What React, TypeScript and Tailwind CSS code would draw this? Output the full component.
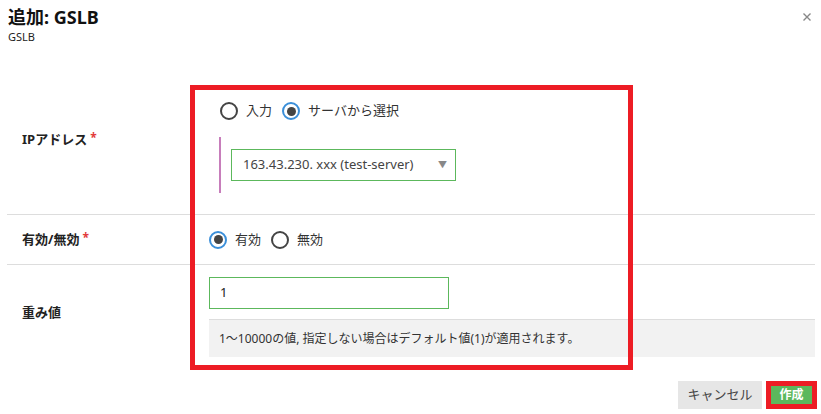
function Radio({ label, checked }: { label: string; checked?: boolean }) {
  return (
    <label className="flex items-center gap-[8px] text-[13px] text-[#333]">
      {checked ? (
        <span className="flex h-[18px] w-[18px] items-center justify-center rounded-full border-[2px] border-[#3b8fd9] bg-white">
          <span className="h-[9px] w-[9px] rounded-full bg-[#444]" />
        </span>
      ) : (
        <span className="h-[18px] w-[18px] rounded-full border-[2px] border-[#444] bg-white" />
      )}
      <span>{label}</span>
    </label>
  );
}

function FieldLabel({ text, required }: { text: string; required?: boolean }) {
  return (
    <div className="flex w-[192px] shrink-0 items-center pl-[15px] text-[13px] font-bold text-[#222]">
      {text}
      {required && <span className="ml-[3px] -mt-[4px] text-[12px] text-[#e23a3a]">*</span>}
    </div>
  );
}

export default function App() {
  return (
    <div className="relative h-[414px] w-[821px] overflow-hidden bg-white font-['Noto_Sans','Noto_Sans_CJK_JP',sans-serif]">
      {/* Header */}
      <div className="px-[8px] pt-[6px]">
        <h1 className="text-[18px] font-bold leading-[22px] text-[#111]">追加: GSLB</h1>
        <p className="mt-[2px] text-[11px] leading-[14px] text-[#222]">GSLB</p>
      </div>
      <button className="absolute right-[10px] top-[13px]">
        <svg width="8" height="8" viewBox="0 0 8 8" stroke="#888" strokeWidth="1.4">
          <path d="M0.5 0.5 L7.5 7.5 M7.5 0.5 L0.5 7.5" />
        </svg>
      </button>

      {/* Form */}
      <div className="ml-[7px] mt-[21px] w-[808px]">
        {/* IP address */}
        <div className="flex h-[150px] border-b border-[#dddddd]">
          <FieldLabel text="IPアドレス" required />
          <div className="flex-1 pl-[10px] pt-[37px]">
            <div className="ml-[11px] flex h-[18px] items-center gap-[10px]">
              <Radio label="入力" />
              <Radio label="サーバから選択" checked />
            </div>
            <div className="ml-[10px] mt-[17px] w-fit border-l-[2px] border-[#c77dbb] py-[12px] pl-[10px]">
              <div className="flex h-[32px] w-[225px] items-center justify-between border border-[#5cb85c] pl-[11px] pr-[8px] text-[13px] text-[#444]">
                <span>163.43.230. xxx (test-server)</span>
                <span className="text-[9px] text-[#888]">▼</span>
              </div>
            </div>
          </div>
        </div>

        {/* Enabled / disabled */}
        <div className="flex h-[50px] border-b border-[#dddddd]">
          <FieldLabel text="有効/無効" required />
          <div className="flex flex-1 items-center gap-[10px] pl-[10px]">
            <Radio label="有効" checked />
            <Radio label="無効" />
          </div>
        </div>

        {/* Weight */}
        <div className="flex">
          <FieldLabel text="重み値" />
          <div className="flex-1 pb-[3px] pl-[10px] pt-[12px]">
            <div className="flex h-[32px] w-[240px] items-center border border-[#5cb85c] px-[10px] text-[13px] text-[#222]">
              1
            </div>
            <div className="mt-[10px] flex h-[38px] items-center border-t border-[#dddddd] bg-[#f2f2f2] px-[10px] text-[12px] text-[#333]">
              1～10000の値, 指定しない場合はデフォルト値(1)が適用されます。
            </div>
          </div>
        </div>
      </div>

      {/* Footer */}
      <div className="mt-[21px] flex justify-end gap-[4px] pr-[4px]">
        <button className="h-[28px] w-[84px] bg-[#e6e6e6] text-[13px] text-[#444]">キャンセル</button>
        <div className="border-[5px] border-[#ed1c24]">
          <button className="block h-[18px] w-[41px] bg-[#5cb85c] text-[12px] font-bold leading-[18px] text-white">作成</button>
        </div>
      </div>

      {/* Highlight annotation */}
      <div className="pointer-events-none absolute left-[190px] top-[85px] h-[285px] w-[443px] border-[5px] border-[#ed1c24]" />
    </div>
  );
}
